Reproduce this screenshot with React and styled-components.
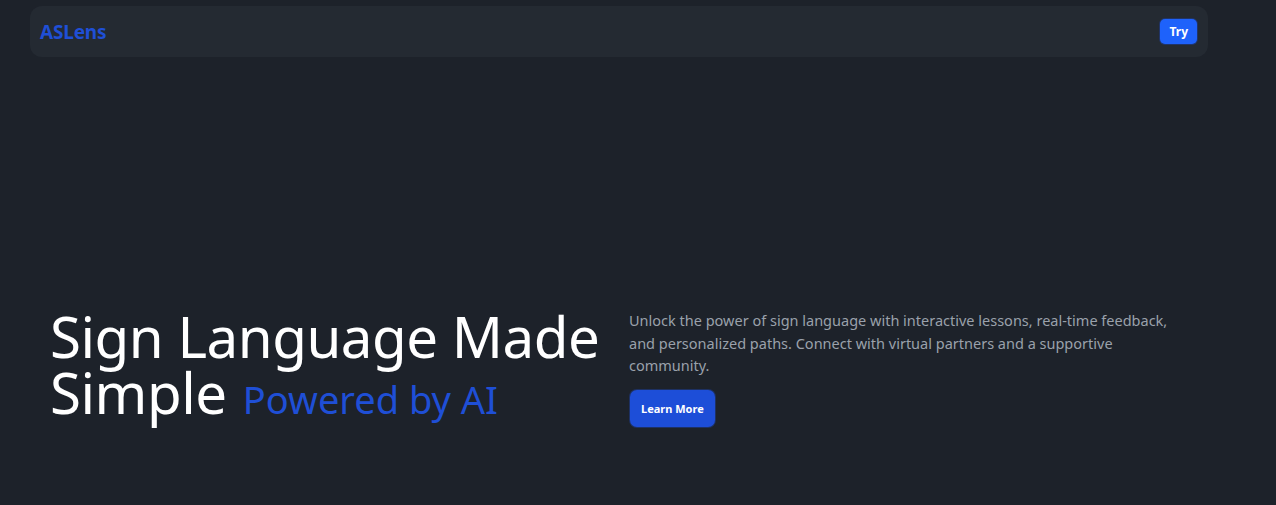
import styled, { createGlobalStyle } from "styled-components";

const GlobalStyle = createGlobalStyle`
  html, body {
    margin: 0;
    padding: 0;
    background: #1d222a;
    font-family: "Noto Sans", "Open Sans", sans-serif;
  }
  * { box-sizing: border-box; }
`;

const Page = styled.div`
  min-height: 505px;
  background: #1d222a;
  padding: 6px 68px 0 30px;
`;

const Navbar = styled.nav`
  height: 51px;
  background: #242a32;
  border-radius: 12px;
  display: flex;
  align-items: center;
  justify-content: space-between;
  padding: 0 11px 0 10px;
`;

const Logo = styled.a`
  color: #1f4fd6;
  font-weight: 700;
  font-size: 19px;
  text-decoration: none;
  letter-spacing: -0.2px;
`;

const Button = styled.button`
  border: none;
  color: #fff;
  font-family: inherit;
  font-weight: 700;
  cursor: pointer;
  background: ${(p) => (p.$small ? "#1e62fb" : "#1d4ed8")};
  font-size: ${(p) => (p.$small ? "12px" : "11px")};
  border-radius: ${(p) => (p.$small ? "5px" : "7px")};
  padding: ${(p) => (p.$small ? "4px 9px" : "11px 11px")};
  margin-left: ${(p) => (p.$small ? "0" : "1px")};
  box-shadow: 0 0 0 1px rgba(30, 60, 140, 0.6);
`;

const Hero = styled.section`
  display: flex;
  align-items: flex-start;
  padding: 250px 0 0 20px;
  gap: 19px;
`;

const Heading = styled.h1`
  margin: 2px 0 0;
  width: 560px;
  flex-shrink: 0;
  color: #fff;
  font-weight: 400;
  font-size: 56.5px;
  line-height: 56px;
  letter-spacing: -0.5px;
`;

const Accent = styled.span`
  color: #1f4fd6;
  font-size: 38px;
  line-height: 1;
  letter-spacing: 0;
  margin-left: 2px;
`;

const Side = styled.div`
  width: 550px;
  padding-top: 2px;
`;

const Text = styled.p`
  margin: 0 0 13px;
  color: #9aa1ab;
  font-size: 14.5px;
  line-height: 22.5px;
`;

export default function App() {
  return (
    <>
      <GlobalStyle />
      <Page>
        <Navbar>
          <Logo href="#">ASLens</Logo>
          <Button $small>Try</Button>
        </Navbar>
        <Hero>
          <Heading>
            Sign Language Made Simple <Accent>Powered by AI</Accent>
          </Heading>
          <Side>
            <Text>
              Unlock the power of sign language with interactive lessons,
              real-time feedback, and personalized paths. Connect with virtual
              partners and a supportive community.
            </Text>
            <Button>Learn More</Button>
          </Side>
        </Hero>
      </Page>
    </>
  );
}
